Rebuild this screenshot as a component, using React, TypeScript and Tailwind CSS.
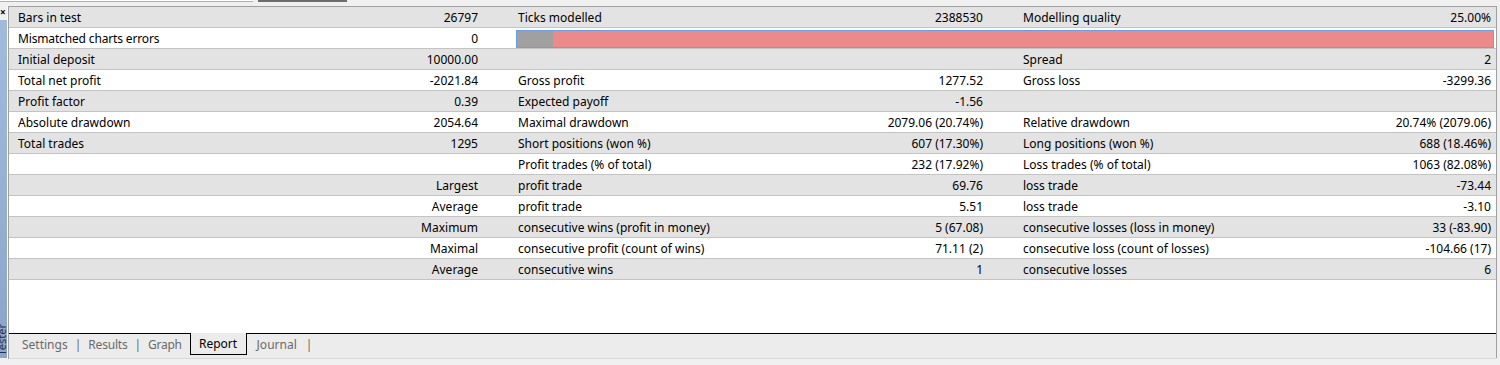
import React from "react";

type Row = [string, string, string, string, string, string];

const rows: Row[] = [
  ["Bars in test", "26797", "Ticks modelled", "2388530", "Modelling quality", "25.00%"],
  ["Mismatched charts errors", "0", "", "", "", ""],
  ["Initial deposit", "10000.00", "", "", "Spread", "2"],
  ["Total net profit", "-2021.84", "Gross profit", "1277.52", "Gross loss", "-3299.36"],
  ["Profit factor", "0.39", "Expected payoff", "-1.56", "", ""],
  ["Absolute drawdown", "2054.64", "Maximal drawdown", "2079.06 (20.74%)", "Relative drawdown", "20.74% (2079.06)"],
  ["Total trades", "1295", "Short positions (won %)", "607 (17.30%)", "Long positions (won %)", "688 (18.46%)"],
  ["", "", "Profit trades (% of total)", "232 (17.92%)", "Loss trades (% of total)", "1063 (82.08%)"],
  ["", "Largest", "profit trade", "69.76", "loss trade", "-73.44"],
  ["", "Average", "profit trade", "5.51", "loss trade", "-3.10"],
  ["", "Maximum", "consecutive wins (profit in money)", "5 (67.08)", "consecutive losses (loss in money)", "33 (-83.90)"],
  ["", "Maximal", "consecutive profit (count of wins)", "71.11 (2)", "consecutive loss (count of losses)", "-104.66 (17)"],
  ["", "Average", "consecutive wins", "1", "consecutive losses", "6"],
];

function TableRow({ r, i }: { r: Row; i: number }) {
  const bg = i % 2 === 0 ? "bg-[#e3e3e3]" : "bg-white";
  if (i === 1) {
    return (
      <div className={`flex h-[21px] border-b border-[#c4c4c4] ${bg}`}>
        <div className="w-[251px] pl-[9px] pt-[1px] leading-[20px] whitespace-nowrap tracking-[-0.15px]">{r[0]}</div>
        <div className="w-[226px] pr-[8px] pt-[1px] leading-[20px] text-right">{r[1]}</div>
        <div className="flex-1 pl-[30px] pr-[2px] pt-[2px]">
          <div className="flex h-[18px] border border-[#6f9fe3]">
            <div className="w-[36px] bg-[#a0a0a0]" />
            <div className="flex-1 bg-[#eb8a8a]" />
          </div>
        </div>
      </div>
    );
  }
  return (
    <div className={`flex h-[21px] border-b border-[#c4c4c4] ${bg}`}>
      <div className="w-[251px] pl-[9px] pt-[1px] leading-[20px] whitespace-nowrap">{r[0]}</div>
      <div className="w-[226px] pr-[8px] pt-[1px] leading-[20px] text-right whitespace-nowrap">{r[1]}</div>
      <div className="w-[274px] pl-[32px] pt-[1px] leading-[20px] whitespace-nowrap">{r[2]}</div>
      <div className="w-[231px] pr-[8px] pt-[1px] leading-[20px] text-right whitespace-nowrap">{r[3]}</div>
      <div className="w-[269px] pl-[32px] pt-[1px] leading-[20px] whitespace-nowrap">{r[4]}</div>
      <div className="flex-1 pr-[5px] pt-[1px] leading-[20px] text-right whitespace-nowrap">{r[5]}</div>
    </div>
  );
}

export default function App() {
  return (
    <div className="w-[1500px] h-[365px] overflow-hidden bg-[#f0f0f0] text-black text-[12px] font-['Noto_Sans',sans-serif] flex flex-col">
      {/* top strip */}
      <div className="h-[6px] flex items-start shrink-0">
        <div className="w-[253px] h-[2px] bg-white border-b border-[#b0b0b0]" />
        <div className="w-[5px]" />
        <div className="w-[89px] h-[2px] bg-[#6d6d6d]" />
      </div>
      <div className="flex flex-1 min-h-0">
        {/* sidebar */}
        <div className="w-[7px] flex flex-col shrink-0">
          <div className="h-[14px] relative">
            <span className="absolute left-[0px] top-[1px] text-[10px] font-bold leading-none">×</span>
          </div>
          <div className="flex-1 bg-gradient-to-b from-[#a2bbdd] to-[#8ba4c9] overflow-hidden flex flex-col justify-end">
            <div className="text-[11px] text-[#1b2f55] leading-[7px] [writing-mode:vertical-rl] rotate-180 ml-[-2px] mb-[2px]">Tester</div>
          </div>
          <div className="h-[1px]" />
        </div>
        <div className="w-[1px] bg-white shrink-0" />
        {/* main panel */}
        <div className="flex-1 flex flex-col border-l border-t border-[#a0a0a0] mr-[3px]">
          <div className="flex-1 bg-white border-r border-[#a0a0a0]">
            {rows.map((r, i) => (
              <TableRow key={i} r={r} i={i} />
            ))}
          </div>
          {/* tab bar */}
          <div className="h-[25px] shrink-0 flex items-start bg-[#ececec] border-r border-[#a0a0a0] relative pt-[1px]">
            <div className="absolute left-0 right-0 top-0 h-[1px] bg-black" />
            <div className="flex items-center h-[21px] pl-[13px] text-[#6a6a6a] relative">
              <span>Settings</span>
              <span className="mx-[7px]">|</span>
              <span className="tracking-[-0.2px]">Results</span>
              <span className="mx-[7px]">|</span>
              <span className="tracking-[-0.3px]">Graph</span>
            </div>
            <div className="relative ml-[8px] mt-[-1px] h-[22px] w-[57px] pt-[1px] flex items-center justify-center bg-[#ececec] border-l border-r border-b border-black text-black">
              Report
            </div>
            <div className="flex items-center h-[21px] pl-[10px] text-[#6a6a6a]">
              <span>Journal</span>
              <span className="ml-[9px]">|</span>
            </div>
          </div>
          <div className="h-[1px] shrink-0 bg-[#d8d8d8]" />
        </div>
      </div>
      <div className="h-[6px] shrink-0 bg-[#f0f0f0]" />
    </div>
  );
}
